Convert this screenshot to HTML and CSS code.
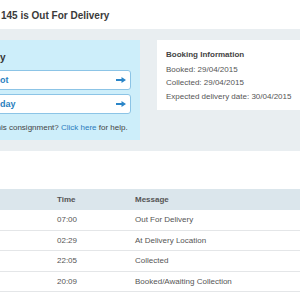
FILE: index.html
```html
<!DOCTYPE html>
<html lang="en">
<head>
  <meta charset="UTF-8" />
  <meta name="viewport" content="width=device-width, initial-scale=1.0" />
  <title>Tracking</title>
  <link rel="stylesheet" href="styles.css">
</head>
<body>
<header class="topbar">
  <h1 class="title">145 is Out For Delivery</h1>
</header>

<section class="summary">
  <div class="actions">
    <div class="actions-title">y</div>
    <a class="action" href="#">ot
      <svg class="arrow" viewBox="0 0 10 6" width="10" height="6"><path d="M0 2h5.5V0L10 3 5.5 6V4H0z" /></svg>
    </a>
    <a class="action" href="#">day
      <svg class="arrow" viewBox="0 0 10 6" width="10" height="6"><path d="M0 2h5.5V0L10 3 5.5 6V4H0z" /></svg>
    </a>
    <p class="help"><span class="cut">his consignment?</span> <a href="#">Click here</a> for help.</p>
  </div>
  <div class="booking">
    <div class="booking-title">Booking Information</div>
    <div class="booking-line">Booked: 29/04/2015</div>
    <div class="booking-line">Collected: 29/04/2015</div>
    <div class="booking-line">Expected delivery date: 30/04/2015</div>
  </div>
</section>

<div class="gap"></div>

<div class="history">
  <div class="row head">
    <div></div>
    <div>Time</div>
    <div>Message</div>
  </div>
  <div class="row">
    <div></div>
    <div>07:00</div>
    <div>Out For Delivery</div>
  </div>
  <div class="row">
    <div></div>
    <div>02:29</div>
    <div>At Delivery Location</div>
  </div>
  <div class="row">
    <div></div>
    <div>22:05</div>
    <div>Collected</div>
  </div>
  <div class="row">
    <div></div>
    <div>20:09</div>
    <div>Booked/Awaiting Collection</div>
  </div>
</div>
</body>
</html>
```

FILE: styles.css
```css
body {
  margin: 0;
  padding: 0;
  width: 300px;
  height: 300px;
  overflow: hidden;
  background: white;
  font-family: "Liberation Sans", Arial, sans-serif;
  color: #555;
}
.topbar {
  height: 29px;
  display: flex;
  align-items: center;
  padding-left: 1px;
}
.title {
  margin: 0;
  font-size: 10px;
  font-weight: 700;
  color: #3a3a3a;
  line-height: 12px;
  padding-top: 2px;
}

.summary {
  height: 122px;
  background: #e9eef1;
  display: flex;
  align-items: flex-start;
  padding-top: 11px;
  margin-left: -12px;
  box-sizing: border-box;
}
.actions {
  width: 152px;
  height: 100px;
  flex-shrink: 0;
  background: #cdeefa;
  padding: 12px 9px 0 0;
  box-sizing: border-box;
}
.actions-title {
  padding-left: 12px;
  font-size: 10px;
  font-weight: 700;
  line-height: 12px;
  color: #333;
}
.action {
  display: flex;
  align-items: center;
  height: 20px;
  box-sizing: border-box;
  margin-top: 4px;
  padding: 0 4px 0 11px;
  background: white;
  border: 1px solid #8cc4e6;
  border-radius: 3px;
  font-size: 9px;
  font-weight: 700;
  color: #2a7fc0;
  text-decoration: none;
}
.actions-title + .action {
  margin-top: 6px;
}
.arrow {
  margin-left: auto;
  fill: #2a85c8;
}
.help {
  margin: 9px 0 0;
  padding-left: 12px;
  font-size: 8px;
  line-height: 10px;
  color: #444;
}
.help .cut {
  margin-left: -3.5px;
}
.help a {
  color: #2b7bbd;
  text-decoration: none;
}

.booking {
  flex: 1;
  height: 70px;
  margin-left: 17px;
  padding: 8px 0 0 9px;
  box-sizing: border-box;
  background: white;
  font-size: 8px;
}
.booking-title {
  font-weight: 700;
  color: #444;
  line-height: 13px;
  margin-bottom: 2px;
}
.booking-line {
  line-height: 13.4px;
}

.gap {
  height: 38px;
}

.row {
  display: grid;
  grid-template-columns: 50px 78px 1fr;
  height: 19.5px;
  align-items: center;
  border-bottom: 1px solid #e4e6e8;
  font-size: 8px;
}
.row > div {
  padding-left: 7px;
}
.row.head {
  height: 21px;
  border-bottom: none;
  background: #dbe6ec;
  font-weight: 700;
  color: #555;
}
```
